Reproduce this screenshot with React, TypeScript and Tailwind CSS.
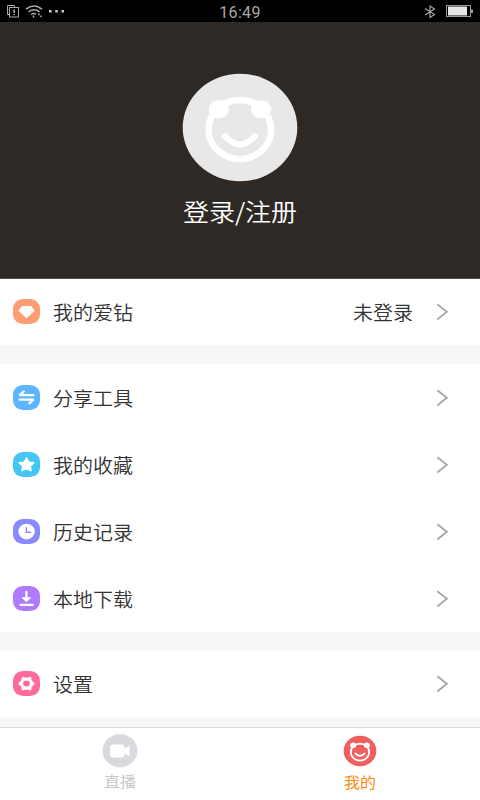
import React from 'react';

type Item = { id: string; label: string; color: string; note?: string };

const WALLET: Item[] = [{ id: 'gem', label: '我的爱钻', color: '#ff9c74', note: '未登录' }];

const TOOLS: Item[] = [
  { id: 'share', label: '分享工具', color: '#5cb5ff' },
  { id: 'star', label: '我的收藏', color: '#43c6f5' },
  { id: 'history', label: '历史记录', color: '#8a8aff' },
  { id: 'download', label: '本地下载', color: '#b07aff' },
];

const SETTINGS: Item[] = [{ id: 'settings', label: '设置', color: '#ff6a9c' }];

// White symbols, drawn on a 27x25 tile
const SYMBOLS: Record<string, React.ReactNode> = {
  gem: (
    <path d="M9.4 7.6h8.4l3.2 4-7.5 6.9-7.4-6.9z" fill="#fff" stroke="#fff" strokeWidth="1.2" strokeLinejoin="round" />
  ),
  share: (
    <path d="M10.8 6.4 6.8 10.1H20.4M6.6 14.7H20.2L16.4 18.4" fill="none" stroke="#fff" strokeWidth="2.2" strokeLinecap="round" strokeLinejoin="round" />
  ),
  star: (
    <path d="m13.5 5.9 2.2 4.3 5 .7-3.5 3.2.8 4.5-4.5-2.1L9 18.6l.8-4.5-3.5-3.2 5-.7z" fill="#fff" stroke="#fff" strokeWidth="1.6" strokeLinejoin="round" />
  ),
  history: (
    <>
      <ellipse cx="13.6" cy="12.6" rx="8.2" ry="7.8" fill="#fff" />
      <path d="M13.3 8.6v4.7h4.3" fill="none" stroke="#8a8aff" strokeWidth="1.4" strokeLinecap="round" />
    </>
  ),
  download: (
    <>
      <path d="M13.4 5.8v7M7.4 18.8h12.5" fill="none" stroke="#fff" strokeWidth="2.2" strokeLinecap="round" />
      <path d="M9.2 11.8h8.4l-4.2 3.9z" fill="#fff" stroke="#fff" strokeWidth="1" strokeLinejoin="round" />
    </>
  ),
  settings: (
    <>
      <ellipse cx="13.5" cy="12.6" rx="5" ry="4.6" fill="none" stroke="#fff" strokeWidth="3.2" />
      <path
        d="M10.3 7.5v.2M16.7 7.5v.2M10.3 17.5v.2M16.7 17.5v.2M7.3 12.6h.1M19.6 12.6h.1"
        stroke="#fff"
        strokeWidth="3.6"
        strokeLinecap="round"
      />
    </>
  ),
};

function Row({ item, height = 'h-[66px] pb-px' }: { item: Item; height?: string }) {
  return (
    <div className={`flex ${height} items-center bg-white pl-[13px] pr-[31px] text-xl font-[350] text-[#333]`}>
      <svg width="27" height="25" viewBox="0 0 27 25">
        <rect width="27" height="25" rx="10" ry="9.5" fill={item.color} />
        {SYMBOLS[item.id]}
      </svg>
      <span className="ml-[13px] mt-px scale-y-[0.95]">{item.label}</span>
      {item.note && <span className="ml-auto mr-[23px] mt-px scale-y-[0.95]">{item.note}</span>}
      <svg className={item.note ? '' : 'ml-auto'} width="13" height="18" viewBox="0 0 13 18">
        <path d="M1.3 1.2 10.8 8.8l-9.5 7.6" fill="none" stroke="#a9a9a9" strokeWidth="1.9" />
      </svg>
    </div>
  );
}

function StatusBar() {
  return (
    <div className="grid h-[22px] grid-cols-3 items-center bg-black text-[#a8a8a8]">
      <svg width="70" height="22" viewBox="0 0 70 22" fill="none" stroke="currentColor">
        <path d="M9.5 14.5h-2v-9h7v2" />
        <rect x="9.5" y="7.5" width="9" height="9.5" />
        <path d="M14.2 9.5v3.5M14.2 14v1.3" strokeWidth="1.6" />
        <path d="M26 9.2q8-6.5 16 0M28.5 12q5.5-4.5 11 0M31 14.5q2.8-2 5 0" strokeWidth="1.5" />
        <path d="M33.5 15.6v1.8M39 13.5v1.8M41 15.5v1.8" strokeWidth="1.6" />
        <path d="M49 11.3h2.6M55.2 11.3h2.6M61.5 11.3H64" stroke="#c8c8c8" strokeWidth="2.4" />
      </svg>
      <span className="justify-self-center pt-[3px] font-[Roboto,sans-serif] text-base leading-none tracking-[0.3px]">16:49</span>
      <svg className="justify-self-end" width="60" height="22" viewBox="420 0 60 22" fill="none">
        <path d="m425 8.5 9.5 6-4.5 3V6l4.5 3-9.5 6" stroke="#a8a8a8" strokeWidth="1.1" />
        <rect x="446.5" y="5.5" width="24" height="11" stroke="#999" />
        <rect x="448" y="6.5" width="19" height="9" fill="#e6e6e6" />
        <path d="M472 9.5v3.5" stroke="#999" strokeWidth="2" />
      </svg>
    </div>
  );
}

export default function App() {
  return (
    <div className="flex h-[800px] w-[480px] flex-col overflow-hidden bg-[#f7f7f7] font-['Noto_Sans_CJK_SC',sans-serif]">
      <StatusBar />

      {/* Profile header */}
      <div className="flex h-[257px] flex-col items-center border-b border-[#55504c] bg-[#2e2925] pt-[51px] text-white">
        <svg width="116" height="109" viewBox="0 0 116 109">
          <ellipse cx="58" cy="54.5" rx="57.3" ry="53.8" fill="#e8e8e8" />
          <ellipse cx="57.8" cy="56.5" rx="31.3" ry="29.5" fill="none" stroke="#fff" strokeWidth="6.6" />
          <ellipse cx="36.8" cy="36.3" rx="10" ry="9.2" fill="#fff" />
          <ellipse cx="79" cy="36.3" rx="10" ry="9.2" fill="#fff" />
          <path d="M43 63.2q15 16.5 30 0" fill="none" stroke="#fff" strokeWidth="6" strokeLinecap="round" />
        </svg>
        <span className="mt-[11px] scale-y-[0.93] text-[26px] font-[350] leading-9">登录/注册</span>
      </div>

      <div>{WALLET.map(i => <Row key={i.id} item={i} />)}</div>
      <div className="mt-[19px]">{TOOLS.map(i => <Row key={i.id} item={i} height="h-[67px]" />)}</div>
      <div className="mt-[19px]">{SETTINGS.map(i => <Row key={i.id} item={i} />)}</div>

      {/* Bottom tabs */}
      <div className="mt-auto grid h-[73px] grid-cols-2 border-t border-[#d9d9d9] bg-white text-base leading-6">
        <div className="flex flex-col items-center pt-[6px] text-[#c4c4c4]">
          <svg width="36" height="34" viewBox="0 0 36 34">
            <ellipse cx="18" cy="16.7" rx="17.5" ry="16.5" fill="#d9dadf" />
            <rect x="8" y="10.5" width="14.5" height="13" rx="3" fill="#fff" />
            <path d="m21.5 15.5 6-4v11l-6-4z" fill="#fff" />
          </svg>
          <span className="scale-y-[0.94] font-[350]">直播</span>
        </div>
        <div className="flex flex-col items-center pt-[7px] text-[#ff8a0c]">
          <svg width="34" height="32" viewBox="0 0 34 32">
            <ellipse cx="17" cy="16" rx="16.4" ry="15.2" fill="#ee6060" />
            <ellipse cx="17" cy="17.2" rx="9.2" ry="8.5" fill="none" stroke="#fff" strokeWidth="1.8" />
            <ellipse cx="10.2" cy="10.3" rx="3" ry="2.7" fill="#fff" />
            <ellipse cx="23.8" cy="10.3" rx="3" ry="2.7" fill="#fff" />
            <path d="M12.5 18.5q4.5 4.8 9 0" fill="none" stroke="#fff" strokeWidth="1.9" strokeLinecap="round" />
          </svg>
          <span className="mt-[2px] scale-y-[0.94]">我的</span>
        </div>
      </div>
    </div>
  );
}
